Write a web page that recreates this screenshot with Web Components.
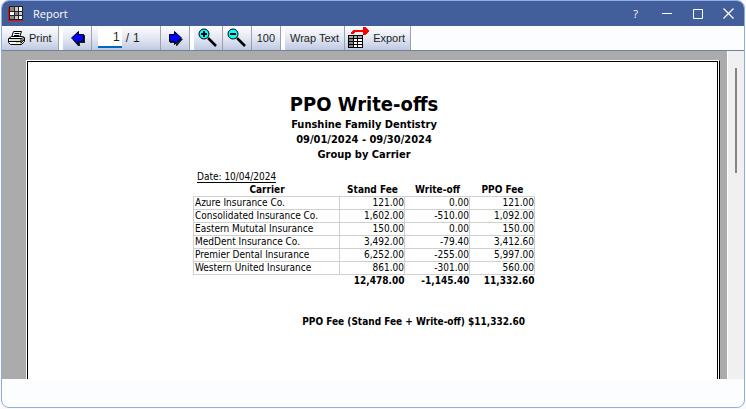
<!DOCTYPE html>
<html lang="en">
<head>
<meta charset="utf-8">
<title>Report</title>
<style>
  html, body {
    height: 100%;
    margin: 0;
  }
  body {
    background: #fafafa;
    font-family: "Liberation Sans", Arial, sans-serif;
    font-size: 11px;
    color: #1e1e1e;
  }
</style>
</head>
<body>
<report-window>
  <title-bar slot="title">Report</title-bar>
  <tool-bar slot="tools">
    <tool-group>
      <tool-button icon="print">Print</tool-button>
    </tool-group>
    <tool-group>
      <tool-button icon="back" label="Previous page"></tool-button>
      <page-counter page="1" total="1"></page-counter>
      <tool-button icon="fwd" label="Next page"></tool-button>
    </tool-group>
    <tool-group>
      <tool-button icon="zoomin" label="Zoom in"></tool-button>
      <tool-button icon="zoomout" label="Zoom out"></tool-button>
      <tool-button>100</tool-button>
    </tool-group>
    <tool-group>
      <tool-button>Wrap Text</tool-button>
      <tool-button icon="export">Export</tool-button>
    </tool-group>
  </tool-bar>
  <report-page>
    <span slot="title">PPO Write-offs</span>
    <span slot="practice">Funshine Family Dentistry</span>
    <span slot="range">09/01/2024 - 09/30/2024</span>
    <span slot="group">Group by Carrier</span>
    <span slot="date">Date: 10/04/2024</span>
    <report-table></report-table>
    <span slot="summary">PPO Fee (Stand Fee + Write-off) $11,332.60</span>
  </report-page>
</report-window>

<script>
const icons = {
  print: `<svg width="17" height="16" viewBox="0 0 17 16">
    <path d="M5.5 1.5h8l-2 6h-8z" fill="#fff" stroke="#000"/>
    <path d="M6.5 3.5h5M6 5.5h5" stroke="#000"/>
    <path d="M.5 8.5l3-2h11l2 1v4l-3 3h-11l-2-2z" fill="#fff" stroke="#000"/>
    <path d="M1 8.5h12v5M13 8.5l3-1M1 11.5h12l3-3M13 13l3-3" fill="none" stroke="#000"/>
    <path d="M2 10h10" stroke="#bbb"/><path d="M8 12.5h3" stroke="#dede00"/>
  </svg>`,
  back: `<svg width="14" height="15" viewBox="0 0 14 15">
    <path d="M8 1v3h6v8h-5v3h-2l-5-6z" fill="#222"/>
    <path d="M.5 7L7.500 .5V3.500h5v7h-5V13.500z" fill="#00f" stroke="#000"/>
  </svg>`,
  fwd: `<svg width="14" height="15" viewBox="0 0 14 15">
    <path d="M1 4v8h6v3h1l6-7z" fill="#222"/>
    <path d="M12.500 7L5.500 .5V3.500h-5v7h5V13.500z" fill="#00f" stroke="#000"/>
  </svg>`,
  zoomin: `<svg width="20" height="20" viewBox="0 0 20 20">
    <path d="M10 10l8 8" stroke="#000" stroke-width="2.500"/>
    <circle cx="6" cy="6" r="5" fill="#0ff" stroke="#000"/>
    <path d="M3 6h6M6 3v6" stroke="#000" stroke-width="2"/>
  </svg>`,
  zoomout: `<svg width="20" height="20" viewBox="0 0 20 20">
    <path d="M10 10l8 8" stroke="#000" stroke-width="2.500"/>
    <circle cx="6" cy="6" r="5" fill="#0ff" stroke="#000"/>
    <path d="M3 6h6" stroke="#000" stroke-width="2"/>
  </svg>`,
  export: `<svg width="22" height="22" viewBox="0 0 22 22" shape-rendering="crispEdges">
    <path d="M0 8h15v13H0z" fill="#000"/>
    <path d="M1 9h4v2H1zm5 0h3v2H6zm4 0h4v2h-4z" fill="#aaa"/><path d="M1 12h4v2H1zm0 3h4v2H1zm0 3h4v2H1z" fill="#888"/>
    <path d="M6 12h3v2H6zm4 0h4v2h-4zM6 15h3v2H6zm4 0h4v2h-4zM6 18h3v2H6zm4 0h4v2h-4z" fill="#fff"/>
    <path d="M3 7V5l3-2h9V0h2l5 4-5 4h-2V5H7L5 7z" fill="#f00"/>
  </svg>`
};

class ReportWindow extends HTMLElement {
  constructor() {
    super();
    this.attachShadow({ mode: 'open' }).innerHTML = `
      <style>
      :host {
        display: flex;
        flex-direction: column;
        box-sizing: border-box;
        min-height: 100vh;
        padding: 0 1px 1px;
      }
      .frame {
        flex: 1;
        display: flex;
        flex-direction: column;
        border: 1px solid #8faee6;
        border-radius: 8px;
        overflow: hidden;
        background: #fcfdff;
      }
      .view {
        flex: 1;
        display: flex;
        background: #ababab;
      }
      .sheet {
        flex: 1;
        display: flex;
        padding: 9px 7px 0 24px;
      }
      .scroll {
        width: 17px;
        box-sizing: border-box;
        border-left: 1px solid #fff;
        padding: 17px 7px 0 7px;
        background: #f0f0f0;
      }
      .thumb {
        width: 2px;
        height: 105px;
        background: #858585;
      }
      footer {
        height: 28px;
      }
      </style>
      <div class="frame">
        <slot name="title"></slot>
        <slot name="tools"></slot>
        <div class="view">
          <div class="sheet"><slot></slot></div>
          <div class="scroll"><div class="thumb"></div></div>
        </div>
        <footer></footer>
      </div>
    `;
  }
}

class TitleBar extends HTMLElement {
  constructor() {
    super();
    this.attachShadow({ mode: 'open' }).innerHTML = `
      <style>
      :host {
        display: flex;
        align-items: center;
        height: 25px;
        padding: 0 0 0 6px;
        background: #425f9c;
        color: #fff;
        font: 11px "Open Sans", "Noto Sans", sans-serif;
      }
      .text {
        flex: 1;
        padding-left: 10px;
      }
      button {
        width: 31px;
        height: 24px;
        padding: 0;
        border: 0;
        background: none;
        color: inherit;
        font: inherit;
      }
      svg { display: block; margin: auto; }
      svg.logo { margin: 0; }
      </style>
      <svg class="logo" width="15" height="15" viewBox="0 0 15 15" shape-rendering="crispEdges">
        <path d="M0 1h15v14H0z" fill="#f00"/><path d="M1 0h14v14H1z" fill="#222"/>
        <path d="M2 1h4v4H2zM7 6h3v3H7zM2 10h4v3H2z" fill="#888"/>
        <path d="M7 1h3v4H7zM11 6h3v3h-3zM7 10h3v3H7z" fill="#ccc"/>
        <path d="M11 1h3v4h-3zM2 6h4v3H2zM11 10h3v3h-3z" fill="#fff"/>
      </svg>
      <span class="text"><slot></slot></span>
      <button>?</button>
      <button aria-label="Minimize"><svg width="10" height="11"><path d="M0 5.500h10" stroke="#fff"/></svg></button>
      <button aria-label="Maximize"><svg width="10" height="10"><path d="M.5.5h9v9h-9z" fill="none" stroke="#fff"/></svg></button>
      <button aria-label="Close"><svg width="11" height="11"><path d="M.5.5l10 10M10.500.5l-10 10" stroke="#fff" stroke-width="1.200"/></svg></button>
    `;
  }
}

class ToolBar extends HTMLElement {
  constructor() {
    super();
    this.attachShadow({ mode: 'open' }).innerHTML = `
      <style>
      :host {
        display: flex;
        gap: 4px;
        height: 24px;
        border-bottom: 1px solid #70829c;
        background: #fcfdff;
      }
      </style>
      <slot></slot>
    `;
  }
}

class ToolGroup extends HTMLElement {
  constructor() {
    super();
    this.attachShadow({ mode: 'open' }).innerHTML = `
      <style>
      :host {
        display: flex;
        background: linear-gradient(#fcfdff, #e4e8f3 50%, #bfc9e2);
      }
      </style>
      <slot></slot>
    `;
  }
}

class ToolButton extends HTMLElement {
  constructor() {
    super();
    const icon = this.getAttribute('icon');
    const label = this.getAttribute('label');
    this.attachShadow({ mode: 'open' }).innerHTML = `
      <style>
      :host { display: flex; }
      button {
        display: flex;
        align-items: center;
        gap: 4px;
        height: 24px;
        padding: 0 5px;
        border: 0;
        border-right: 1px solid #a0a0a8;
        background: none;
        color: inherit;
        font: inherit;
        white-space: nowrap;
      }
      button.print { padding: 0 6px; }
      button.back, button.fwd { padding: 0 6px 0 8px; }
      button.zoomin, button.zoomout { padding: 0 4px; }
      button.export { padding: 0 5px 0 3px; gap: 3px; }
      svg { display: block; }
      </style>
      <button class="${icon || ''}" ${label ? `aria-label="${label}"` : ''}>${icons[icon] || ''}<slot></slot></button>
    `;
  }
}

class PageCounter extends HTMLElement {
  constructor() {
    super();
    this.attachShadow({ mode: 'open' }).innerHTML = `
      <style>
      :host {
        display: flex;
        align-items: center;
        gap: 4px;
        padding: 0 20px 0 6px;
        border-right: 1px solid #a0a0a8;
        font-size: 12px;
      }
      input {
        box-sizing: border-box;
        width: 24px;
        height: 20px;
        padding: 0 2px 0 0;
        border: 0;
        border-bottom: 2px solid #0067c0;
        background: #fff;
        color: inherit;
        font: inherit;
        text-align: right;
      }
      </style>
      <input aria-label="Page" value="${this.getAttribute('page')}">
      <span>/ </span><span>${this.getAttribute('total')}</span>
    `;
  }
}

class ReportPage extends HTMLElement {
  constructor() {
    super();
    this.attachShadow({ mode: 'open' }).innerHTML = `
      <style>
      :host {
        flex: 1;
        display: flex;
        border: 1px solid #fff;
        border-right-color: #000;
        border-bottom: 0;
        background: #fff;
        color: #000;
        font-family: "DejaVu Sans Condensed", "DejaVu Sans", sans-serif;
      }
      article {
        flex: 1;
        display: flex;
        flex-direction: column;
        align-items: center;
        margin-right: 1px;
        padding: 30px 17px 0 0;
        border: 1px solid #000;
        border-bottom: 0;
      }
      h1, h2, p { margin: 0; }
      h1 { font-size: 20px; line-height: 25px; }
      h2 { font-size: 11px; line-height: 15px; }
      .body {
        display: flex;
        flex-direction: column;
        width: 342px;
        margin-top: 9px;
        font-size: 10px;
        line-height: 12px;
      }
      .date {
        align-self: flex-start;
        margin: 0 0 1px 4px;
        border-bottom: 1px solid #000;
        line-height: 11px;
      }
      .summary {
        margin-top: 29px;
        padding-right: 10px;
        text-align: right;
        font-weight: bold;
      }
      </style>
      <article>
        <h1><slot name="title"></slot></h1>
        <h2><slot name="practice"></slot></h2>
        <h2><slot name="range"></slot></h2>
        <h2><slot name="group"></slot></h2>
        <div class="body">
          <p class="date"><slot name="date"></slot></p>
          <slot></slot>
          <p class="summary"><slot name="summary"></slot></p>
        </div>
      </article>
    `;
  }
}

const rows = [
  ['Azure Insurance Co.', '121.00', '0.00', '121.00'],
  ['Consolidated Insurance Co.', '1,602.00', '-510.00', '1,092.00'],
  ['Eastern Mututal Insurance', '150.00', '0.00', '150.00'],
  ['MedDent Insurance Co.', '3,492.00', '-79.40', '3,412.60'],
  ['Premier Dental Insurance', '6,252.00', '-255.00', '5,997.00'],
  ['Western United Insurance', '861.00', '-301.00', '560.00']
];

class ReportTable extends HTMLElement {
  constructor() {
    super();
    this.attachShadow({ mode: 'open' }).innerHTML = `
      <style>
      :host { display: block; }
      table {
        width: 100%;
        table-layout: fixed;
        border-collapse: collapse;
      }
      col.fee { width: 65px; }
      th, td {
        height: 12px;
        padding: 0 0 0 1px;
        line-height: 12px;
        white-space: nowrap;
      }
      tbody td { border: 1px solid #d0d0d0; }
      td:not(:first-child) { text-align: right; }
      tfoot td { font-weight: bold; }
      </style>
      <table>
        <colgroup><col><col class="fee"><col class="fee"><col class="fee"></colgroup>
        <thead><tr><th>Carrier</th><th>Stand Fee</th><th>Write-off</th><th>PPO Fee</th></tr></thead>
        <tbody>${rows.map(r => `<tr>${r.map(c => `<td>${c}</td>`).join('')}</tr>`).join('')}</tbody>
        <tfoot><tr><td></td><td>12,478.00</td><td>-1,145.40</td><td>11,332.60</td></tr></tfoot>
      </table>
    `;
  }
}

customElements.define('report-window', ReportWindow);
customElements.define('title-bar', TitleBar);
customElements.define('tool-bar', ToolBar);
customElements.define('tool-group', ToolGroup);
customElements.define('tool-button', ToolButton);
customElements.define('page-counter', PageCounter);
customElements.define('report-page', ReportPage);
customElements.define('report-table', ReportTable);
</script>
</body>
</html>
